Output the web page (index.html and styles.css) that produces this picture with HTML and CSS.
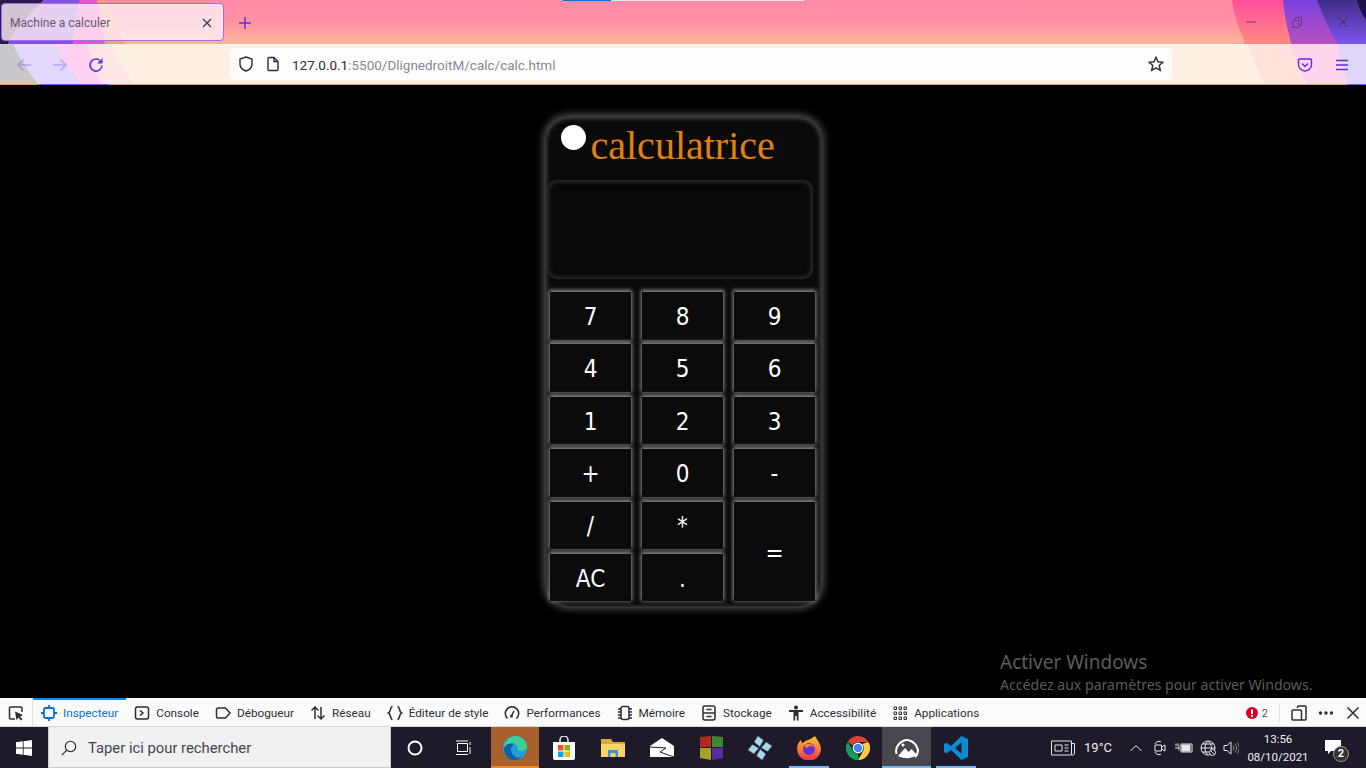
FILE: index.html
```html
<!DOCTYPE html>
<html>
<head>
    <meta charset="utf-8">
    <meta name="viewport" content="width=device-width, initial-scale=1.0">
    <title>Machine a calculer</title>
    <link rel="stylesheet" href="styles.css">
</head>
<body>
    <header class="browser">
        <svg class="theme-art" viewBox="0 0 1366 85" width="1366" height="85">
            <defs>
                <linearGradient id="art-purple" x1="0" y1="0" x2="0" y2="1"><stop offset="0" stop-color="#7a40e0"/><stop offset="1" stop-color="#b850c0"/></linearGradient>
                <linearGradient id="art-pink" x1="0" y1="0" x2="0" y2="1"><stop offset="0" stop-color="#ff4f9c"/><stop offset="1" stop-color="#ff8a80"/></linearGradient>
                <linearGradient id="art-dark" x1="0" y1="0" x2="0" y2="1"><stop offset="0" stop-color="#3f2c85"/><stop offset="1" stop-color="#7f55ee"/></linearGradient>
            </defs>
            <path d="M0 0H44C30 14 14 30 8 44H0Z" fill="#2a1a4e"/>
            <path d="M44 0H80C76 14 74 30 73 44H8C14 30 30 14 44 0Z" fill="#8450e0"/>
            <path d="M80 0H97C100 14 103 30 105 44H73C74 30 76 14 80 0Z" fill="#f050c8"/>
            <path d="M97 0H104C112 14 118 30 125 44H105C103 30 100 14 97 0Z" fill="#ff9a80"/>
            <path d="M0 44H110C118 58 126 72 133 84H0Z" fill="#ffe6e4"/>
            <path d="M0 44H87C92 58 96 72 100 84H0Z" fill="#ffd0f0"/>
            <path d="M0 44H55C62 58 72 72 82 84H0Z" fill="#e3d8fb"/>
            <path d="M0 44H13C20 58 28 72 38 84H0Z" fill="#c9c8cc"/>
            <path d="M1232 0H1283C1284 16 1288 30 1291 44H1245C1240 30 1234 16 1232 0Z" fill="url(#art-pink)"/>
            <path d="M1283 0H1366V44H1291C1288 30 1284 16 1283 0Z" fill="url(#art-purple)"/>
            <path d="M1317 0H1366V44H1337C1330 30 1322 14 1317 0Z" fill="url(#art-dark)"/>
            <path d="M1357 0H1366V20C1362 14 1359 8 1357 0Z" fill="#20104a"/>
            <path d="M1248 44H1290C1294 58 1300 72 1307 84H1265C1258 72 1252 58 1248 44Z" fill="#ffe2dc"/>
            <path d="M1290 44H1337C1340 58 1343 72 1347 84H1307C1300 72 1294 58 1290 44Z" fill="#ffd4ec"/>
            <path d="M1337 44H1366V84H1347C1343 72 1340 58 1337 44Z" fill="#e0d6fa"/>
            <rect x="38" y="84" width="70" height="1" fill="#8a55e0"/>
            <rect x="1347" y="84" width="19" height="1" fill="#8a55e0"/>
        </svg>
        <div class="load-bar"><span class="load-blue"></span><span class="load-white"></span></div>
        <div class="tabstrip">
            <div class="tab">
                <span class="tab-title">Machine a calculer</span>
                <svg class="tab-close" viewBox="0 0 10 10" width="10" height="10"><path d="M1 1L9 9M9 1L1 9"/></svg>
            </div>
            <svg class="new-tab" viewBox="0 0 14 14" width="14" height="14"><path d="M7 1V13M1 7H13"/></svg>
            <div class="window-btns">
                <span class="win-btn"><svg viewBox="0 0 10 10" width="10" height="10"><path d="M0 5H10"/></svg></span>
                <span class="win-btn"><svg viewBox="0 0 10 11" width="10" height="11"><path d="M.5 3.5H7V10.5H.5ZM3 3.5V.5H9.5V8H7"/></svg></span>
                <span class="win-btn win-close"><svg viewBox="0 0 10 10" width="10" height="10"><path d="M0 0L10 10M10 0L0 10"/></svg></span>
            </div>
        </div>
        <div class="toolbar">
            <div class="nav-btns">
                <span class="nav-btn dim"><svg viewBox="0 0 16 16" width="16" height="16"><path d="M15 8H2M7.500 2.500L2 8L7.500 13.500"/></svg></span>
                <span class="nav-btn dim"><svg viewBox="0 0 16 16" width="16" height="16"><path d="M1 8H14M8.500 2.500L14 8L8.500 13.500"/></svg></span>
                <span class="nav-btn"><svg viewBox="0 0 16 16" width="16" height="16"><path d="M14 8.500A6 6 0 1 1 11.500 3.200"/><path class="nav-fill" d="M14.500 1V6.500H9Z"/></svg></span>
            </div>
            <div class="urlbar">
                <svg class="url-icon" viewBox="0 0 16 16" width="16" height="16"><path d="M8 1L14 3V8C14 11.5 11 14 8 15C5 14 2 11.5 2 8V3Z"/></svg>
                <svg class="url-icon" viewBox="0 0 16 16" width="16" height="16"><path d="M3 2.5A1 1 0 0 1 4 1.5H9L13 5.5V13.5A1 1 0 0 1 12 14.500H4A1 1 0 0 1 3 13.500Z"/><path d="M9 1.500V5.500H13" /></svg>
                <span class="url-text"><b>127.0.0.1</b>:5500/DlignedroitM/calc/calc.html</span>
                <svg class="url-star" viewBox="0 0 16 16" width="16" height="16"><path d="M8 1.300L10 5.800L14.900 6.300L11.200 9.500L12.300 14.400L8 11.800L3.700 14.400L4.800 9.500L1.100 6.300L6 5.800Z"/></svg>
            </div>
            <div class="tool-right">
                <svg viewBox="0 0 16 16" width="16" height="16"><path d="M2.500 2H13.500A1 1 0 0 1 14.500 3V7.500A6.500 6.500 0 0 1 1.500 7.500V3A1 1 0 0 1 2.500 2Z"/><path d="M5 6.500L8 9.500L11 6.500"/></svg>
                <svg viewBox="0 0 16 16" width="16" height="16"><path d="M2 3.500H14M2 8H14M2 12.500H14"/></svg>
            </div>
        </div>
    </header>

    <main class="page">
        <div class="calc">
            <div class="calc-head">
                <span class="calc-dot"></span>
                <h1 class="calc-title">calculatrice</h1>
            </div>
            <div class="calc-screen"></div>
            <div class="calc-keys">
                <button>7</button><button>8</button><button>9</button>
                <button>4</button><button>5</button><button>6</button>
                <button>1</button><button>2</button><button>3</button>
                <button>+</button><button>0</button><button>-</button>
                <button>/</button><button>*</button><button class="key-equal">=</button>
                <button>AC</button><button>.</button>
            </div>
        </div>
        <div class="activate">
            <div class="activate-title">Activer Windows</div>
            <div class="activate-sub">Accédez aux paramètres pour activer Windows.</div>
        </div>
    </main>

    <nav class="devtools">
        <span class="picker"><svg viewBox="0 0 16 16" width="16" height="16"><path d="M7 14H2.500A1 1 0 0 1 1.500 13V3A1 1 0 0 1 2.500 2H13A1 1 0 0 1 14 3V7"/><path class="solid" d="M7 6.500L15 10L12 11.500L14.500 14.500L13 15.500L10.500 12.500L8.500 15Z"/></svg></span>
        <a class="dt-tab active"><svg viewBox="0 0 16 16" width="16" height="16"><rect x="3" y="3" width="10" height="10" rx="1.500"/><path d="M8 0V3M8 13V16M0 8H3M13 8H16"/></svg>Inspecteur</a>
        <a class="dt-tab"><svg viewBox="0 0 16 16" width="16" height="16"><rect x="1.500" y="2" width="13" height="12" rx="2"/><path d="M6 5.500L9 8L6 10.500"/></svg>Console</a>
        <a class="dt-tab"><svg viewBox="0 0 16 16" width="16" height="16"><path d="M3 3H10.500L15 8L10.500 13H3A1.500 1.500 0 0 1 1.500 11.500V4.500A1.500 1.500 0 0 1 3 3Z"/></svg>Débogueur</a>
        <a class="dt-tab"><svg viewBox="0 0 16 16" width="16" height="16"><path d="M5 14V2M1.500 5.500L5 2L8.500 5.500M11 2V14M7.500 10.500L11 14L14.500 10.500"/></svg>Réseau</a>
        <a class="dt-tab"><svg viewBox="0 0 16 16" width="16" height="16"><path d="M5.500 1.500C3 1.500 4 7 1.500 8C4 9 3 14.500 5.500 14.500M10.500 1.500C13 1.500 12 7 14.500 8C12 9 13 14.500 10.500 14.500"/></svg>Éditeur de style</a>
        <a class="dt-tab"><svg viewBox="0 0 16 16" width="16" height="16"><path d="M3.500 13.500A6.700 6.700 0 1 1 12.500 13.500"/><path d="M8 10L10 6" /><circle class="solid" cx="7.500" cy="11" r="1.500"/></svg>Performances</a>
        <a class="dt-tab"><svg viewBox="0 0 16 16" width="16" height="16"><rect x="4" y="1.500" width="8" height="13" rx="2"/><path d="M1 4H4M1 7H4M1 10H4M1 13H4M12 4H15M12 7H15M12 10H15M12 13H15"/></svg>Mémoire</a>
        <a class="dt-tab"><svg viewBox="0 0 16 16" width="16" height="16"><rect x="2" y="1" width="12" height="14" rx="2"/><path d="M2 8H14M5.500 4.500H10.500M5.500 11.500H10.500"/></svg>Stockage</a>
        <a class="dt-tab"><svg viewBox="0 0 16 16" width="16" height="16"><circle class="solid" cx="8" cy="2.500" r="2"/><path class="solid" d="M1 5H15V7H10.500V15.500H8.800V11H7.200V15.500H5.500V7H1Z"/></svg>Accessibilité</a>
        <a class="dt-tab"><svg class="apps-icon" viewBox="0 0 16 16" width="16" height="16"><path d="M2 2h2.500v2.500H2zM7 2h2.500v2.500H7zM12 2h2.500v2.500H12zM2 7h2.500v2.500H2zM7 7h2.500v2.500H7zM12 7h2.500v2.500H12zM2 12h2.500v2.500H2zM7 12h2.500v2.500H7zM12 12h2.500v2.500H12z"/></svg>Applications</a>
        <div class="dt-right">
            <span class="dt-error"><svg viewBox="0 0 12 12" width="12" height="12"><circle cx="6" cy="6" r="6" fill="#d70022"/><rect x="5" y="2.500" width="2" height="4.500" fill="#fff"/><rect x="5" y="8" width="2" height="1.800" fill="#fff"/></svg>2</span>
            <span class="dt-sep"></span>
            <svg viewBox="0 0 16 16" width="16" height="16"><path d="M6.500 3V2A1 1 0 0 1 7.500 1H14A1 1 0 0 1 15 2V14A1 1 0 0 1 14 15H10.500M2 5H9.500A1 1 0 0 1 10.500 6V15H2A1 1 0 0 1 1 14V6A1 1 0 0 1 2 5Z"/></svg>
            <svg viewBox="0 0 16 16" width="16" height="16"><circle class="solid" cx="2.500" cy="8" r="1.700"/><circle class="solid" cx="8" cy="8" r="1.700"/><circle class="solid" cx="13.500" cy="8" r="1.700"/></svg>
            <svg viewBox="0 0 16 16" width="16" height="16"><path d="M2.500 2.500L13.500 13.500M13.500 2.500L2.500 13.500"/></svg>
        </div>
    </nav>

    <footer class="taskbar">
        <span class="start">
            <svg viewBox="0 0 16 16" width="16" height="16"><path fill="#fff" d="M0 2.300L6.800 1.300V7.600H0ZM7.600 1.200L16 0V7.600H7.600ZM0 8.400H6.800V14.700L0 13.700ZM7.600 8.400H16V16L7.600 14.800Z"/></svg>
        </span>
        <div class="search">
            <svg viewBox="0 0 16 16" width="16" height="16"><circle cx="9.500" cy="6.500" r="5.200"/><path d="M5.800 10.200L.8 15.200"/></svg>
            <span>Taper ici pour rechercher</span>
        </div>
        <span class="task-sys"><svg viewBox="0 0 16 16" width="16" height="16"><circle cx="8" cy="8" r="6.500" stroke="#fff" stroke-width="2" fill="none"/></svg></span>
        <span class="task-sys"><svg viewBox="0 0 16 16" width="16" height="16"><path d="M2.500 3.500H12.500V11.500H2.500ZM1 1H13M1 14.500H13M15 2V5M15 7V14" stroke="#fff" fill="none"/></svg></span>
        <div class="task-apps">
            <span class="app edge-app">
                <svg viewBox="0 0 24 24" width="24" height="24"><circle cx="12" cy="12" r="12" fill="#1f9fd8"/><path d="M1 12C1 5 7 0 13 0C19 0 24 5 24 11C24 14 21 15 18 15C13 15 16 11 13 9C9 7 3 8 1 12Z" fill="#3ccf9a"/><path d="M1 12C3 8 8 6 12 8C8 9 7 13 9 17C10 20 14 23 19 21C16 24 11 25 7 23C3 21 1 17 1 12Z" fill="#0e5fa8"/></svg>
            </span>
            <span class="app">
                <svg viewBox="0 0 24 24" width="24" height="24"><path d="M8 6V4A4 4 0 0 1 16 4V6" fill="none" stroke="#eee" stroke-width="1.500"/><path d="M1 6H23V22A2 2 0 0 1 21 24H3A2 2 0 0 1 1 22Z" fill="#fff"/><rect x="6" y="9" width="5.500" height="5.500" fill="#f25022"/><rect x="12.500" y="9" width="5.500" height="5.500" fill="#7fba00"/><rect x="6" y="15.500" width="5.500" height="5.500" fill="#00a4ef"/><rect x="12.500" y="15.500" width="5.500" height="5.500" fill="#ffb900"/></svg>
            </span>
            <span class="app">
                <svg viewBox="0 0 24 24" width="24" height="24"><path d="M0 3H10L12 6H24V21H0Z" fill="#d9a93e"/><path d="M0 8H24V21H0Z" fill="#f6d469"/><path d="M7 21V14H17V21H14.500V17H9.500V21Z" fill="#3b94d9"/></svg>
            </span>
            <span class="app">
                <svg viewBox="0 0 24 24" width="24" height="24"><path d="M0 10L12 2L24 10V21H0Z" fill="#fff"/><path d="M0 11L16 12L10 16L24 21" fill="none" stroke="#1e1a2a"/></svg>
            </span>
            <span class="app">
                <svg viewBox="0 0 24 24" width="24" height="24"><path d="M1 1L12 0V11H1Z" fill="#b02a22"/><path d="M13 0L24 1V11H13Z" fill="#3d8b2e"/><path d="M1 12H12V24L1 22Z" fill="#a5a02a"/><path d="M13 12H24V22L13 24Z" fill="#5a2aa5"/></svg>
            </span>
            <span class="app">
                <svg viewBox="0 0 24 24" width="24" height="24"><g fill="#a8d8ea" stroke="#6aa5bd" stroke-width=".6" transform="rotate(-10 12 12)"><path d="M12 0L16.500 5L12 10.500L7.500 5Z"/><path d="M12 13.500L16.500 19L12 24L7.500 19Z"/><path d="M0 12L5 7.500L10.500 12L5 16.500Z"/><path d="M13.500 12L19 7.500L24 12L19 16.500Z"/></g></svg>
            </span>
            <span class="app app-open">
                <svg viewBox="0 0 24 24" width="24" height="24"><defs><linearGradient id="fx" x1="0" y1="0" x2="0" y2="1"><stop offset="0" stop-color="#ffcb2e"/><stop offset="1" stop-color="#f0304c"/></linearGradient></defs><path d="M18 0C19 3 23 6 24 12A12 12 0 1 1 1 8C2 6 3 5 4 4C4 6 5 7 6 7C8 4 14 4 18 0Z" fill="url(#fx)"/><circle cx="12" cy="13" r="6" fill="#6a30c8"/><path d="M7 9C11 7 17 8 18 12C17 10 12 9 10 12C8 11 8 10 7 9Z" fill="#ff8a2e"/></svg>
            </span>
            <span class="app">
                <svg viewBox="0 0 24 24" width="24" height="24"><path d="M12 0A12 12 0 0 1 22.400 6H12A6 6 0 0 0 6.500 9.500L1.900 5.500A12 12 0 0 1 12 0Z" fill="#db4437"/><path d="M22.400 6A12 12 0 0 1 12 24L17.200 15A6 6 0 0 0 16 8L22.400 6Z" fill="#ffcd40"/><path d="M1.900 5.500L6.800 14.500A6 6 0 0 0 12 18L13 24A12 12 0 0 1 1.900 5.500Z" fill="#0f9d58"/><circle cx="12" cy="12" r="5.400" fill="#fff"/><circle cx="12" cy="12" r="4.300" fill="#4285f4"/></svg>
            </span>
            <span class="app photo-app">
                <svg viewBox="0 0 24 24" width="24" height="24"><path d="M1.500 18A11 11 0 0 1 8 5C12 3 20 4 23 14A9 9 0 0 1 20 21" fill="none" stroke="#fff" stroke-width="2"/><path d="M3 20L10 12L13.500 16L16.500 13L22 19C17 23 8 23 3 20Z" fill="#fff"/><circle cx="8" cy="9" r="1.500" fill="#fff"/></svg>
            </span>
            <span class="app app-open">
                <svg viewBox="0 0 24 24" width="24" height="24"><path d="M17.500 0L24 3V21L17.500 24L7 14L2.500 17.500L0 16V8L2.500 6.500L7 10ZM17.500 6.500L11 12L17.500 17.500Z" fill="#0e8ad4"/></svg>
            </span>
        </div>
        <div class="tray">
            <svg class="tray-news" viewBox="0 0 24 16" width="24" height="16"><path d="M.5 1H20.500V15H.5ZM20.500 3.500H23.500V13A2 2 0 0 1 21 15M4 5H11V11H4ZM13.500 5H17.500M13.500 8H17.500M13.500 11H17.500"/></svg>
            <span class="tray-temp">19°C</span>
            <svg class="tray-chev" viewBox="0 0 12 8" width="12" height="8"><path d="M.5 7L6 1.500L11.500 7"/></svg>
            <svg class="tray-icon" viewBox="0 0 16 16" width="16" height="16"><path d="M3 4A4 4 0 0 1 6 1.500H9M3 12A4 4 0 0 0 6 14.500H9M3 5H9.500V11H3ZM9.500 7L13 5V11L9.500 9"/></svg>
            <svg class="tray-icon" viewBox="0 0 18 12" width="18" height="12"><path d="M6 2H17V10H6Z"/><path class="tray-fill" d="M7 3H15V9H7Z"/><path d="M0 6H4M4 3.500V8.500M1 1.500V4M3 1.500V4"/></svg>
            <svg class="tray-icon" viewBox="0 0 16 16" width="16" height="16"><circle cx="8" cy="8" r="7"/><path d="M1 8H15M2 4H14M2 12H10M8 1C4 5 4 11 8 15M8 1C12 5 12 9 11 10"/><circle class="tray-ban" cx="12.500" cy="12.500" r="3"/><path d="M10.500 10.500L14.500 14.500"/></svg>
            <svg class="tray-icon tray-vol" viewBox="0 0 16 16" width="16" height="16"><path d="M1 5.500H4L8 2V14L4 10.500H1Z"/><path class="tray-dim" d="M10 5.500A4 4 0 0 1 10 10.500M12 3.500A7 7 0 0 1 12 12.500M14 2A9 9 0 0 1 14 14"/></svg>
            <div class="clock"><span>13:56</span><span>08/10/2021</span></div>
            <span class="notif">
                <svg viewBox="0 0 16 15" width="16" height="15"><path d="M0 0H16V11H6L3 14V11H0Z" fill="#fff"/></svg>
                <span class="notif-badge">2</span>
            </span>
        </div>
    </footer>
</body>
</html>
```

FILE: styles.css
```css
* {
    box-sizing: border-box;
}
body {
    margin: 0;
    width: 1366px;
    height: 768px;
    display: flex;
    flex-direction: column;
    overflow: hidden;
    font-family: Roboto, sans-serif;
    background-color: #000;
}

/* browser chrome */
.browser {
    position: relative;
    height: 85px;
    flex: none;
    background: linear-gradient(#ff8aa8 0, #ff90a4 20px, #ffb49a 44px, #fff0e4 44px, #fff0e4 84px, #d0a088 84px);
    overflow: hidden;
}
.theme-art {
    position: absolute;
    top: 0;
    left: 0;
}
.load-bar {
    position: absolute;
    top: 0;
    left: 563px;
    display: flex;
    height: 1px;
}
.load-blue {
    width: 48px;
    background-color: #0a6fd8;
}
.load-white {
    width: 193px;
    background-color: #e6e6e6;
}
.tabstrip {
    position: relative;
    height: 44px;
    display: flex;
    align-items: flex-start;
}
.tab {
    width: 223px;
    height: 38px;
    margin: 3px 0 0 1px;
    padding: 1px 11px 0 8px;
    display: flex;
    align-items: center;
    justify-content: space-between;
    background-color: rgba(255, 240, 245, 0.8);
    border: 1px solid #9a70f0;
    border-radius: 4px;
}
.tab-title {
    font-size: 12px;
    color: #5f5a70;
}
.tab-close path {
    stroke: #3a3550;
    stroke-width: 1.2;
    fill: none;
}
.new-tab {
    margin: 16px 0 0 14px;
}
.new-tab path {
    stroke: #5a30e0;
    stroke-width: 1.4;
    fill: none;
}
.window-btns {
    margin-left: auto;
    display: flex;
}
.win-btn {
    width: 46px;
    height: 44px;
    display: flex;
    align-items: center;
    justify-content: center;
}
.win-btn svg {
    fill: none;
    stroke: #6a3a80;
    stroke-width: 1;
}
.win-close svg {
    stroke: #3f2a70;
}
.toolbar {
    position: relative;
    height: 40px;
    display: flex;
    align-items: flex-start;
}
.nav-btns {
    width: 230px;
    padding: 13px 0 0 16px;
    display: flex;
    gap: 20px;
}
.nav-btn {
    display: flex;
}
.nav-btn svg {
    fill: none;
    stroke: #5a30e0;
    stroke-width: 1.6;
}
.nav-btn svg .nav-fill {
    fill: #5a30e0;
    stroke: none;
}
.nav-btn.dim svg {
    opacity: 0.3;
}
.urlbar {
    width: 942px;
    height: 32px;
    margin-top: 4px;
    padding: 0 8px;
    display: flex;
    align-items: center;
    gap: 11px;
    background-color: #fffdfc;
    border-radius: 4px;
}
.url-icon, .url-star {
    flex: none;
    fill: none;
    stroke: #2b2a40;
    stroke-width: 1.4;
}
.url-star {
    margin-left: auto;
}
.url-text {
    padding-top: 1px;
    font-size: 13.5px;
    color: #8a8894;
}
.url-text b {
    font-weight: normal;
    color: #2b2a40;
}
.tool-right {
    margin-left: auto;
    padding: 13px 16px 0 0;
    display: flex;
    gap: 21px;
}
.tool-right svg {
    fill: none;
    stroke: #5a30e0;
    stroke-width: 1.4;
}

/* page */
.page {
    position: relative;
    height: 613px;
    flex: none;
    padding-top: 32px;
    background-color: #000;
}
.calc {
    width: 277px;
    height: 491px;
    margin: 0 auto;
    padding: 8px 5.5px 0;
    background-color: #0a0a0a;
    border-radius: 24px;
    box-shadow: 0 -1px 8px 1px #5c5c5c, inset 0 0 5px 1px #555;
}
.calc-head {
    height: 55px;
    padding-left: 10.5px;
    display: flex;
    align-items: flex-start;
}
.calc-dot {
    width: 25px;
    height: 25px;
    flex: none;
    background-color: #fff;
    border-radius: 50%;
}
.calc-title {
    margin: 0 0 0 5px;
    font-family: "Liberation Serif", serif;
    font-size: 40px;
    font-weight: normal;
    line-height: 42px;
    color: #e0820f;
}
.calc-screen {
    width: 266px;
    height: 99px;
    margin-left: -3.5px;
    background-color: #080808;
    border-radius: 10px;
    box-shadow: inset 0 0 4px 2px #2e2e2e;
}
.calc-keys {
    margin-top: 13px;
    display: grid;
    grid-template-columns: repeat(3, 81px);
    grid-auto-rows: 47.5px;
    gap: 4.9px 11px;
}
.calc-keys button {
    padding: 2px 0 0;
    font-family: "DejaVu Sans Condensed", "DejaVu Sans", sans-serif;
    font-stretch: condensed;
    font-size: 24px;
    color: #fff;
    background-color: #0b0b0b;
    border: none;
    box-shadow: 0 -1px 4px 1px #909090;
}
.calc-keys .key-equal {
    grid-column: 3;
    grid-row: 5 / span 2;
}
.activate {
    position: absolute;
    left: 1000px;
    top: 564px;
    font-family: "Noto Sans", sans-serif;
    color: #5c5c5c;
}
.activate-title {
    font-size: 19px;
    line-height: 26px;
}
.activate-sub {
    font-size: 14.1px;
    line-height: 20px;
}

/* devtools */
.devtools {
    height: 29px;
    flex: none;
    display: flex;
    align-items: stretch;
    background-color: #fbfbfb;
    border-bottom: 1px solid #d7d7db;
    font-size: 11.75px;
    color: #2d2d33;
}
.devtools svg {
    flex: none;
    fill: none;
    stroke: #2d2d33;
    stroke-width: 1.5;
}
.devtools svg .solid {
    fill: #2d2d33;
    stroke: none;
}
.devtools .apps-icon {
    stroke-width: 1;
}
.picker {
    width: 33px;
    padding: 2px 0 0 8px;
    display: flex;
    align-items: center;
    border-right: 1px solid #e0e0e2;
}
.dt-tab {
    padding: 2px 8px 0;
    display: flex;
    align-items: center;
    gap: 6px;
    white-space: nowrap;
}
.dt-tab.active {
    color: #0a6fd8;
    box-shadow: inset 0 2px 0 #0a84ff;
}
.dt-tab.active svg {
    stroke: #0a6fd8;
    stroke-width: 1.8;
}
.dt-right {
    margin-left: auto;
    padding: 2px 5px 0 0;
    display: flex;
    align-items: center;
    gap: 11px;
}
.dt-error {
    display: flex;
    align-items: center;
    gap: 4px;
    font-size: 11px;
    color: #555;
}
.dt-error svg {
    stroke: none;
}
.dt-sep {
    width: 1px;
    height: 18px;
    background-color: #e0e0e2;
}

/* taskbar */
.taskbar {
    height: 41px;
    flex: none;
    display: flex;
    align-items: stretch;
    background-color: #1e1a2a;
    color: #fff;
}
.start {
    width: 48px;
    flex: none;
    display: flex;
    align-items: center;
    justify-content: center;
}
.search {
    width: 343px;
    flex: none;
    padding: 1px 0 0 12px;
    display: flex;
    align-items: center;
    gap: 11px;
    font-size: 14.8px;
    color: #3e4650;
    background-color: #f1f1f1;
    border: 1px solid #c8c8c8;
    border-top: none;
}
.search svg {
    fill: none;
    stroke: #222;
    stroke-width: 1.1;
}
.task-sys {
    width: 48px;
    flex: none;
    display: flex;
    align-items: center;
    justify-content: center;
}
.task-apps {
    margin-left: 4px;
    display: flex;
}
.app {
    position: relative;
    width: 49px;
    display: flex;
    align-items: center;
    justify-content: center;
}
.app-open::after {
    content: "";
    position: absolute;
    left: 5px;
    right: 4px;
    bottom: 0;
    height: 2px;
    background-color: #76b9ed;
}
.edge-app {
    width: 48px;
    background-color: #a8602c;
    box-shadow: inset 0 -2px 0 #f08a1e;
}
.photo-app {
    background-color: #4a4650;
    box-shadow: inset 0 -2px 0 #76b9ed;
}
.tray {
    margin-left: auto;
    display: flex;
    align-items: center;
    font-size: 13px;
    color: #eee;
}
.tray svg {
    flex: none;
}
.tray-news, .tray-chev, .tray-icon {
    fill: none;
    stroke: #e6e6e6;
    stroke-width: 1;
}
.tray-temp {
    margin: 0 18px 0 9px;
    font-size: 13px;
}
.tray-chev {
    margin-right: 10px;
}
.tray-icon {
    margin-right: 7px;
}
.tray-vol {
    margin-right: 3px;
}
.tray-fill {
    fill: #e6e6e6;
}
.tray-ban {
    fill: #1e1a2a;
}
.tray-dim {
    stroke: #888;
}
.clock {
    width: 72px;
    margin-right: 2px;
    display: flex;
    flex-direction: column;
    align-items: center;
    font-size: 11.5px;
    line-height: 18px;
}
.notif {
    position: relative;
    width: 34px;
    margin-right: 16px;
    display: flex;
    justify-content: center;
}
.notif-badge {
    position: absolute;
    left: 17px;
    top: 6px;
    width: 16px;
    height: 16px;
    font-size: 11px;
    font-weight: bold;
    line-height: 14px;
    text-align: center;
    color: #fff;
    background-color: #333;
    border: 1px solid #999;
    border-radius: 50%;
}
```
